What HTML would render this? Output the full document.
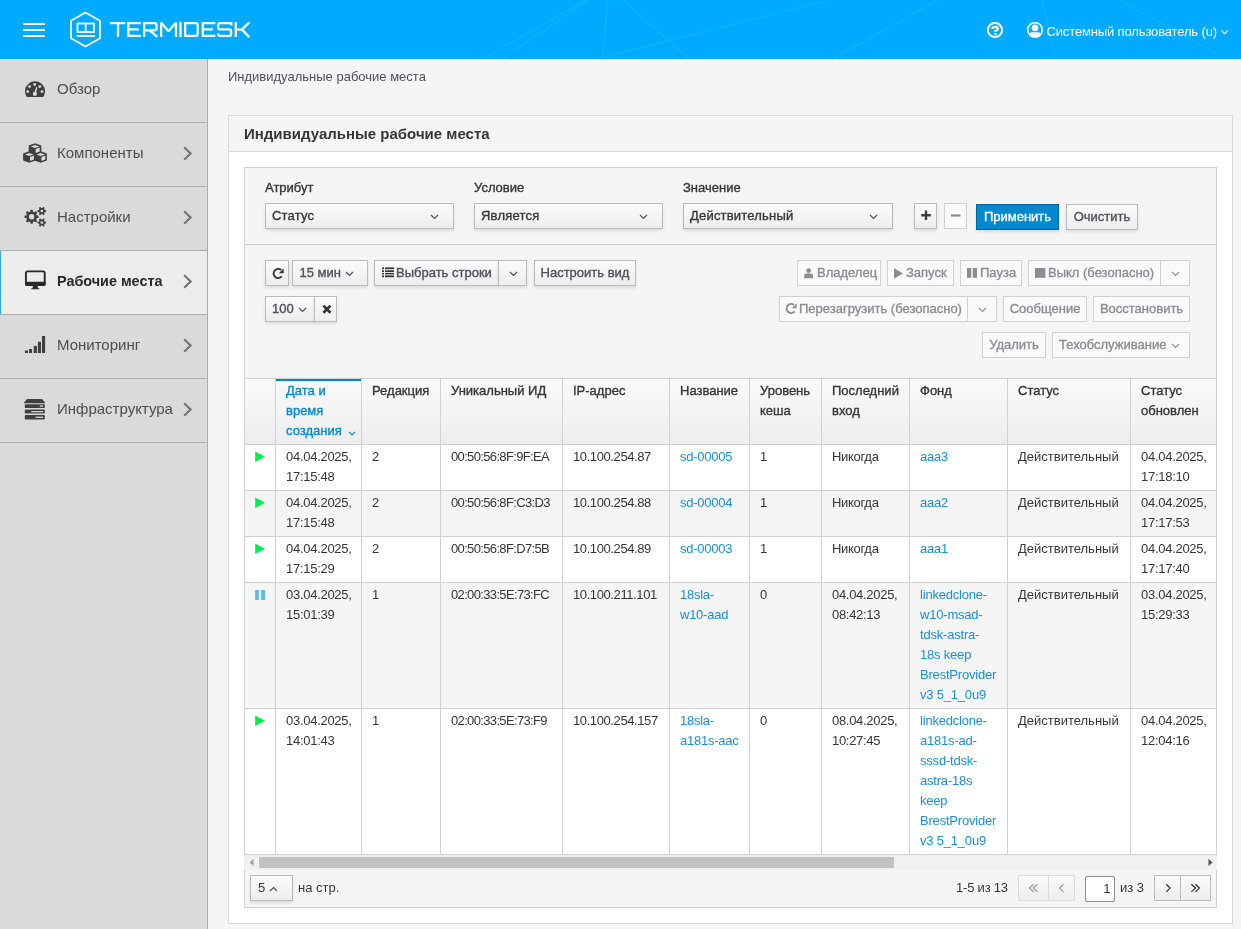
<!DOCTYPE html>
<html><head><meta charset="utf-8">
<style>
*{box-sizing:border-box}
html,body{margin:0;padding:0}
body{width:1241px;height:929px;overflow:hidden;position:relative;background:#f5f5f5;font-family:"Liberation Sans",sans-serif;font-size:13px;color:#363636}
.a{position:absolute}
.hdr{left:0;top:0;width:1241px;height:59px;background:#00aaff;overflow:hidden}
.sb{left:0;top:59px;width:208px;height:870px;background:#dadada;border-right:1px solid #ababab}
.si{position:absolute;left:0;width:207px;height:64px;border-bottom:1px solid #acacac}
.si .t{position:absolute;left:57px;top:20px;font-size:15px;line-height:20px;color:#4d4d4d;white-space:nowrap}
.si svg.ic{position:absolute}
.si svg.ch{position:absolute;left:180px;top:22px}
.sb .act{background:#ececec;border-left:1px solid #39a5dc}
.card{left:228px;top:115px;width:1005px;height:809px;background:#fff;border:1px solid #d9d9d9}
.card .ch{position:absolute;left:0;top:0;width:1003px;height:36px;background:#f5f5f5;border-bottom:1px solid #d9d9d9}
.panel{left:244px;top:167px;width:973px;height:741px;background:#f5f5f5;border:1px solid #d1d1d1}
.sel{position:absolute;height:26px;border:1px solid #bbb;background:linear-gradient(#fafafa,#ededed);box-shadow:0 2px 3px rgba(3,3,3,.1);color:#363636;line-height:24px;padding-left:6px;white-space:nowrap}
.sel svg{position:absolute;top:10px}
.btn{position:absolute;height:26px;border:1px solid #bbb;background:linear-gradient(#fafafa,#ededed);box-shadow:0 2px 3px rgba(3,3,3,.1);color:#4d5258;line-height:23px;white-space:nowrap;text-align:center}
.dis{background:#fafafa;border-color:#d1d1d1;box-shadow:none;color:#8b8d8f}
.sb2{-webkit-text-stroke:0.35px currentColor}
.prim{background:#0088ce;border-color:#00659c;color:#fff}
.th{line-height:20px;color:#363636;white-space:nowrap}
.td{line-height:20px;color:#363636;white-space:nowrap}
.pgb{border:1px solid #bbb;background:linear-gradient(#fafafa,#ededed)}
.pgb.dis{border-color:#dadada;background:linear-gradient(#fafafa,#ededed)}
.lbl{position:absolute;top:177.5px;line-height:20px;color:#363636;white-space:nowrap}
body{will-change:transform}
</style></head><body>

<!-- HEADER -->
<div class="a hdr">
  <svg class="a" style="left:0;top:0" width="1241" height="59">
    <g stroke="#12b6ff" stroke-width="1.3" opacity=".8"><line x1="481.7" y1="59" x2="586.4" y2="0"/><line x1="501.8" y1="59" x2="588.4" y2="0"/><line x1="602.5" y1="59" x2="607.8" y2="0"/><line x1="622.7" y1="0" x2="689.2" y2="59"/><line x1="596.5" y1="59" x2="830.8" y2="0"/><line x1="833" y1="59" x2="937.6" y2="0"/><line x1="1042" y1="0" x2="1056" y2="59"/><line x1="1119.5" y1="0" x2="1226" y2="59"/></g>
    <g fill="#fff">
      <rect x="23" y="23" width="22" height="2"/>
      <rect x="23" y="29" width="22" height="2"/>
      <rect x="23" y="35" width="22" height="2"/>
    </g>
    <g fill="none" stroke="#fff" stroke-width="2.3" stroke-linejoin="miter">
      <path d="M110.1,23.1H125.3M118,23.1V37.1"/>
      <path d="M140.8,23.1H128.4V35.9H140.8M128.4,29.3H138.7"/>
      <path d="M144.1,37.1V23.1H154.6Q156.6,23.1 156.6,25.1V28.3Q156.6,30.3 154.6,30.3H144.1"/><path d="M149.5,30.3L157.3,36.8" stroke-linecap="butt"/>
      <path d="M161.1,37.1V22.5L168.5,31.2L176,22.5V37.1" stroke-linejoin="bevel"/>
      <path d="M180.5,21.9V37.1"/>
      <path d="M185.2,23.1H195.6Q197.7,23.1 197.7,25.2V33.8Q197.7,35.9 195.6,35.9H185.2Z"/>
      <path d="M215.3,23.1H202.8V35.9H215.3M202.8,29.4H212.9"/>
      <path d="M231.3,25.6V23.1H220.2Q218.2,23.1 218.2,25.1V27.4Q218.2,29.4 220.2,29.4H229.1Q231.1,29.4 231.1,31.4V33.9Q231.1,35.9 229.1,35.9H220.2Q218.2,35.9 218.2,33.9V33.3"/>
      <path d="M235.8,21.9V37.1M236.5,29.6H242.5"/><path d="M249.3,22.3L242,29.6L249.3,37.1" stroke-linejoin="bevel"/>
    </g>
    <g fill="none" stroke="#fff" stroke-width="1.8">
      <polygon points="85.5,12.5 100,20.8 100,38.2 85.5,46.5 71,38.2 71,20.8" stroke-linejoin="round"/>
      <rect x="77.5" y="23.5" width="16.5" height="8.5"/>
      <line x1="85.7" y1="23.5" x2="85.7" y2="32"/>
      <line x1="76.5" y1="36" x2="95" y2="36"/>
    </g>
    <circle cx="995" cy="30" r="7.1" fill="none" stroke="#fff" stroke-width="2"/>
    <path d="M992.6,28.9Q992.6,26.9 995.2,26.9Q997.8,26.9 997.8,28.7Q997.8,29.8 996.4,30.4Q995.3,30.9 995.3,32" fill="none" stroke="#fff" stroke-width="2.4"/>
    <rect x="994.1" y="32.9" width="2.4" height="1.9" fill="#fff"/>
    <circle cx="1035" cy="30" r="7.3" fill="none" stroke="#fff" stroke-width="1.5"/>
    <clipPath id="uc"><circle cx="1035" cy="30" r="7.3"/></clipPath>
    <g fill="#fff" clip-path="url(#uc)">
      <circle cx="1035" cy="27.9" r="3.3"/>
      <path d="M1027,40Q1027,32.3 1032.5,32.3H1037.5Q1043,32.3 1043,40Z"/>
    </g>
    <path d="M1221.3,30.4L1224.6,33.6L1227.9,30.4" fill="none" stroke="#fff" stroke-width="1.2"/>
  </svg>
  <div class="a" style="left:1046.5px;top:21.5px;line-height:20px;color:#fff;white-space:nowrap;letter-spacing:-0.14px">Системный пользователь (u)</div>
</div>

<!-- SIDEBAR -->
<div class="a sb">
  <div class="si" style="top:0"><span class="t">Обзор</span>
    <svg class="ic" style="left:24px;top:22px" width="23" height="17"><path d="M2.6,15.7A10,10 0 1 1 19.4,15.7Q19,15.9 18.4,15.9H3.6Q3,15.9 2.6,15.7Z" fill="#3f3f3f"/><g fill="#dadada"><circle cx="10.7" cy="3.5" r="1.45"/><circle cx="5.6" cy="5.6" r="1.45"/><circle cx="15.8" cy="5.6" r="1.45"/><circle cx="3.7" cy="10.6" r="1.45"/><circle cx="18" cy="10.6" r="1.45"/><circle cx="10.9" cy="12.9" r="2.1"/><path d="M10.2,12.6L12.1,6.1L13.3,6.3L11.9,12.9Z"/></g></svg>
    </div>
  <div class="si" style="top:64px"><span class="t">Компоненты</span>
    <svg class="ic" style="left:23px;top:20px" width="25" height="21"><g fill="#3f3f3f">
      <path d="M12,0.3L18.3,2.6V9.3L12,11.6L5.7,9.3V2.6Z"/><path d="M6.3,8.2L12.5,10.5V17.5L6.3,19.8L0.1,17.5V10.5Z"/><path d="M17.7,8.2L23.9,10.5V17.5L17.7,19.8L11.5,17.5V10.5Z"/></g>
      <g fill="#dadada"><path d="M12,2L16.2,3.4L12,4.9L7.8,3.4Z"/><path d="M12.7,6L16.7,4.6V8.4L12.7,9.9Z"/><path d="M6.3,10L10.5,11.4L6.3,12.9L2.1,11.4Z"/><path d="M7,14L10.9,12.6V16.6L7,18Z"/><path d="M17.7,10L21.9,11.4L17.7,12.9L13.5,11.4Z"/><path d="M18.4,14L22.3,12.6V16.6L18.4,18Z"/></g></svg>
    <svg class="ch" width="14" height="18"><path d="M4.2,2.3L10.6,8.5L4.2,14.7" fill="none" stroke="#72767b" stroke-width="2.2"/></svg></div>
  <div class="si" style="top:128px"><span class="t">Настройки</span>
    <svg class="ic" style="left:24px;top:20px" width="23" height="21"><g fill="#3f3f3f"><path d="M6.39,4.54 L6.42,2.80 L8.78,2.80 L8.81,4.54 L10.47,5.22 L11.72,4.02 L13.38,5.68 L12.18,6.93 L12.86,8.59 L14.60,8.62 L14.60,10.98 L12.86,11.01 L12.18,12.67 L13.38,13.92 L11.72,15.58 L10.47,14.38 L8.81,15.06 L8.78,16.80 L6.42,16.80 L6.39,15.06 L4.73,14.38 L3.48,15.58 L1.82,13.92 L3.02,12.67 L2.34,11.01 L0.60,10.98 L0.60,8.62 L2.34,8.59 L3.02,6.93 L1.82,5.68 L3.48,4.02 L4.73,5.22Z"/><path d="M18.48,0.98 L19.10,-0.20 L20.79,0.77 L20.08,1.90 L20.76,3.08 L22.09,3.03 L22.09,4.97 L20.76,4.92 L20.08,6.10 L20.79,7.23 L19.10,8.20 L18.48,7.02 L17.12,7.02 L16.50,8.20 L14.81,7.23 L15.52,6.10 L14.84,4.92 L13.51,4.97 L13.51,3.03 L14.84,3.08 L15.52,1.90 L14.81,0.77 L16.50,-0.20 L17.12,0.98Z"/><path d="M18.48,12.58 L19.10,11.40 L20.79,12.37 L20.08,13.50 L20.76,14.68 L22.09,14.63 L22.09,16.57 L20.76,16.52 L20.08,17.70 L20.79,18.83 L19.10,19.80 L18.48,18.62 L17.12,18.62 L16.50,19.80 L14.81,18.83 L15.52,17.70 L14.84,16.52 L13.51,16.57 L13.51,14.63 L14.84,14.68 L15.52,13.50 L14.81,12.37 L16.50,11.40 L17.12,12.58Z"/></g><g fill="#dadada"><circle cx="7.6" cy="9.8" r="2.7"/><circle cx="17.8" cy="4" r="1.35"/><circle cx="17.8" cy="15.6" r="1.35"/></g></svg>
    <svg class="ch" width="14" height="18"><path d="M4.2,2.3L10.6,8.5L4.2,14.7" fill="none" stroke="#72767b" stroke-width="2.2"/></svg></div>
  <div class="si act" style="top:192px"><span class="t" style="left:56px;font-weight:bold;color:#292929;font-size:14.4px">Рабочие места</span>
    <svg class="ic" style="left:22.5px;top:19.3px" width="23" height="20"><rect x="1.9" y="1.4" width="18.8" height="13.6" rx="1.6" fill="none" stroke="#292929" stroke-width="1.9"/><rect x="1" y="11.8" width="20.6" height="4" rx="1" fill="#292929"/><path d="M9,15.4H13.6L14,18.2H15.3V19.2H7.3V18.2H8.6Z" fill="#292929"/></svg>
    <svg class="ch" style="left:179px" width="14" height="18"><path d="M4.2,2.3L10.6,8.5L4.2,14.7" fill="none" stroke="#72767b" stroke-width="2.2"/></svg></div>
  <div class="si" style="top:256px"><span class="t">Мониторинг</span>
    <svg class="ic" style="left:24px;top:21px" width="22" height="19"><g fill="#3f3f3f"><rect x="0.9" y="14.5" width="3.1" height="2.5"/><rect x="5" y="13" width="3.1" height="4"/><rect x="9.8" y="9.9" width="3.1" height="7.1"/><rect x="13.9" y="5.8" width="3.1" height="11.2"/><rect x="18" y="0" width="3.1" height="17"/></g></svg>
    <svg class="ch" width="14" height="18"><path d="M4.2,2.3L10.6,8.5L4.2,14.7" fill="none" stroke="#72767b" stroke-width="2.2"/></svg></div>
  <div class="si" style="top:320px"><span class="t">Инфраструктура</span>
    <svg class="ic" style="left:24px;top:20px" width="22" height="22"><g fill="#3f3f3f"><path d="M3,0H18L21,3.6V4.2H0V3.6Z"/><rect x="0.8" y="5.2" width="20" height="3.8" rx="0.8"/><rect x="0.8" y="10.6" width="20" height="4" rx="0.8"/><rect x="0.8" y="16" width="20" height="4.5" rx="0.8"/></g>
      <g fill="#cfcfcf"><rect x="15.8" y="6.4" width="3.2" height="1.4"/><rect x="7.2" y="12" width="11.8" height="1.3"/><rect x="11.6" y="17.6" width="7.4" height="1.4"/></g></svg>
    <svg class="ch" width="14" height="18"><path d="M4.2,2.3L10.6,8.5L4.2,14.7" fill="none" stroke="#72767b" stroke-width="2.2"/></svg></div>
</div>

<!-- BREADCRUMB -->
<div class="a" style="left:228px;top:67px;line-height:20px;color:#4d5258;white-space:nowrap">Индивидуальные рабочие места</div>

<!-- CARD -->
<div class="a card">
  <div class="ch"><div class="a" style="left:15px;top:8px;font-size:15px;font-weight:bold;line-height:20px;color:#363636;white-space:nowrap">Индивидуальные рабочие места</div></div>
</div>

<div class="a panel"></div>
<!-- PANEL START -->
<div class="lbl sb2" style="left:265px">Атрибут</div>
<div class="lbl sb2" style="left:474px">Условие</div>
<div class="lbl sb2" style="left:683px">Значение</div>
<div class="sel" style="left:265px;top:203px;width:189px"><span class="sb2" style="letter-spacing:0.2px">Статус</span><svg width="9" height="6" style="position:absolute;left:164px;top:10px"><path d="M1,1L4.5,4.5L8,1" fill="none" stroke="#4d5258" stroke-width="1.2"/></svg></div>
<div class="sel" style="left:474px;top:203px;width:189px"><span class="sb2" style="letter-spacing:0.2px">Является</span><svg width="9" height="6" style="position:absolute;left:164px;top:10px"><path d="M1,1L4.5,4.5L8,1" fill="none" stroke="#4d5258" stroke-width="1.2"/></svg></div>
<div class="sel" style="left:683px;top:203px;width:210px"><span class="sb2" style="letter-spacing:0.2px">Действительный</span><svg width="9" height="6" style="position:absolute;left:185px;top:10px"><path d="M1,1L4.5,4.5L8,1" fill="none" stroke="#4d5258" stroke-width="1.2"/></svg></div>
<div class="btn " style="left:914px;top:203px;width:23px;height:26px;"><svg width="23" height="24" style="position:absolute;left:0;top:0"><path d="M11,6.4V16.1M6.2,11.2H15.8" stroke="#3a3d40" stroke-width="2.4" fill="none"/></svg></div>
<div class="btn dis" style="left:944px;top:203px;width:23px;height:26px;"><svg width="23" height="24" style="position:absolute;left:0;top:0"><path d="M6,11.5H15.5" stroke="#8b8d8f" stroke-width="2.2" fill="none"/></svg></div>
<div class="btn prim sb2" style="left:976px;top:204px;width:83px;height:26px;">Применить</div>
<div class="btn sb2" style="left:1066px;top:204px;width:72px;height:26px;">Очистить</div>
<div class="a" style="left:245px;top:244px;width:971px;height:1px;background:#d1d1d1"></div>
<div class="btn " style="left:265px;top:260px;width:24px;height:26px;"><svg width="24" height="24" style="position:absolute;left:0;top:0"><path d="M15.09,9.05A4.5,4.5 0 1 0 15.65,15.39" fill="none" stroke="#363636" stroke-width="2"/><path d="M17.6,7.4V12.2H12.8Z" fill="#363636"/></svg></div>
<div class="btn " style="left:292px;top:260px;width:76px;height:26px;"><span class="sb2" style="position:absolute;left:6.5px">15 мин</span><svg width="9" height="6" style="position:absolute;left:52px;top:10px"><path d="M1,1L4.5,4.5L8,1" fill="none" stroke="#4d5258" stroke-width="1.2"/></svg></div>
<div class="btn " style="left:374px;top:260px;width:125px;height:26px;"><svg width="13" height="11" style="position:absolute;left:6px;top:6px"><g fill="#363636"><rect x="1" y="0.4" width="2" height="1.8"/><rect x="4" y="0.4" width="9" height="1.8"/><rect x="1" y="3.3" width="2" height="1.8"/><rect x="4" y="3.3" width="9" height="1.8"/><rect x="1" y="6" width="2" height="1.4"/><rect x="4" y="6" width="9" height="1.4"/><rect x="1" y="8.4" width="2" height="1.8"/><rect x="4" y="8.4" width="9" height="1.8"/></g></svg><span class="sb2" style="position:absolute;left:21px">Выбрать строки</span></div>
<div class="btn " style="left:498px;top:260px;width:29px;height:26px;"><svg width="9" height="6" style="position:absolute;left:10px;top:10px"><path d="M1,1L4.5,4.5L8,1" fill="none" stroke="#4d5258" stroke-width="1.2"/></svg></div>
<div class="btn " style="left:534px;top:260px;width:102px;height:26px;"><span class="sb2">Настроить вид</span></div>
<div class="btn " style="left:265px;top:296px;width:50px;height:26px;"><span class="sb2" style="position:absolute;left:6px">100</span><svg width="9" height="6" style="position:absolute;left:32px;top:10px"><path d="M1,1L4.5,4.5L8,1" fill="none" stroke="#4d5258" stroke-width="1.2"/></svg></div>
<div class="btn " style="left:314px;top:296px;width:23px;height:26px;"><svg width="22" height="24" style="position:absolute;left:0;top:0"><path d="M8.4,8.6L15.5,15.7M15.5,8.6L8.4,15.7" stroke="#363636" stroke-width="2.7" fill="none"/></svg></div>
<div class="btn dis" style="left:797px;top:260px;width:84px;height:26px;"><svg width="10" height="11" style="position:absolute;left:6px;top:7px"><circle cx="4.6" cy="2.6" r="2.4" fill="#8b8d8f"/><path d="M0.2,10.2V7.8Q0.2,5.6 2.4,5.6H6.8Q9,5.6 9,7.8V10.2Z" fill="#8b8d8f"/></svg><span class="sb2" style="position:absolute;left:19px">Владелец</span></div>
<div class="btn dis" style="left:887px;top:260px;width:67px;height:26px;"><svg width="10" height="12" style="position:absolute;left:6px;top:6px"><path d="M0,1.2L9,6.45L0,11.7Z" fill="#8b8d8f"/></svg><span class="sb2" style="position:absolute;left:18px">Запуск</span></div>
<div class="btn dis" style="left:960px;top:260px;width:62px;height:26px;"><svg width="11" height="11" style="position:absolute;left:6px;top:7px"><rect x="0" y="0" width="4.2" height="9.8" fill="#8b8d8f"/><rect x="5.7" y="0" width="4.3" height="9.8" fill="#8b8d8f"/></svg><span class="sb2" style="position:absolute;left:19px">Пауза</span></div>
<div class="btn dis" style="left:1028px;top:260px;width:133px;height:26px;"><svg width="11" height="11" style="position:absolute;left:6px;top:7px"><rect x="0" y="0" width="10.4" height="9.8" fill="#8b8d8f"/></svg><span class="sb2" style="position:absolute;left:19px">Выкл (безопасно)</span></div>
<div class="btn dis" style="left:1160px;top:260px;width:30px;height:26px;"><svg width="9" height="6" style="position:absolute;left:9.5px;top:10px"><path d="M1,1L4.5,4.5L8,1" fill="none" stroke="#8b8d8f" stroke-width="1.2"/></svg></div>
<div class="btn dis" style="left:779px;top:296px;width:189px;height:26px;"><svg width="24" height="24" style="position:absolute;left:-0.7px;top:-1.3px"><path d="M15.09,9.05A4.5,4.5 0 1 0 15.65,15.39" fill="none" stroke="#8b8d8f" stroke-width="2"/><path d="M17.6,7.4V12.2H12.8Z" fill="#8b8d8f"/></svg><span class="sb2" style="position:absolute;left:19px">Перезагрузить (безопасно)</span></div>
<div class="btn dis" style="left:967px;top:296px;width:30px;height:26px;"><svg width="9" height="6" style="position:absolute;left:9.5px;top:10px"><path d="M1,1L4.5,4.5L8,1" fill="none" stroke="#8b8d8f" stroke-width="1.2"/></svg></div>
<div class="btn dis" style="left:1003px;top:296px;width:84px;height:26px;"><span class="sb2">Сообщение</span></div>
<div class="btn dis" style="left:1093px;top:296px;width:97px;height:26px;"><span class="sb2">Восстановить</span></div>
<div class="btn dis" style="left:982px;top:332px;width:64px;height:26px;"><span class="sb2">Удалить</span></div>
<div class="btn dis" style="left:1052px;top:332px;width:138px;height:26px;"><span class="sb2" style="position:absolute;left:6px">Техобслуживание</span><svg width="9" height="6" style="position:absolute;left:118px;top:10px"><path d="M1,1L4.5,4.5L8,1" fill="none" stroke="#8b8d8f" stroke-width="1.2"/></svg></div>
<!-- PANEL END -->
<!-- TABLE START -->
<div class="a" style="left:245px;top:378px;width:971px;height:477px;overflow:hidden">
<div class="a" style="left:0px;top:1px;width:971px;height:65px;background:linear-gradient(#fafafa,#ededed)"></div>
<div class="a" style="left:0px;top:67px;width:971px;height:45px;background:#fff"></div>
<div class="a" style="left:0px;top:113px;width:971px;height:45px;background:#f5f5f5"></div>
<div class="a" style="left:0px;top:159px;width:971px;height:45px;background:#fff"></div>
<div class="a" style="left:0px;top:205px;width:971px;height:125px;background:#f5f5f5"></div>
<div class="a" style="left:0px;top:331px;width:971px;height:145px;background:#fff"></div>
<div class="a" style="left:0px;top:0px;width:971px;height:1px;background:#d1d1d1"></div>
<div class="a" style="left:0px;top:66px;width:971px;height:1px;background:#d1d1d1"></div>
<div class="a" style="left:0px;top:112px;width:971px;height:1px;background:#d1d1d1"></div>
<div class="a" style="left:0px;top:158px;width:971px;height:1px;background:#d1d1d1"></div>
<div class="a" style="left:0px;top:204px;width:971px;height:1px;background:#d1d1d1"></div>
<div class="a" style="left:0px;top:330px;width:971px;height:1px;background:#d1d1d1"></div>
<div class="a" style="left:0px;top:476px;width:971px;height:1px;background:#d1d1d1"></div>
<div class="a" style="left:30px;top:1px;width:1px;height:475px;background:#d1d1d1"></div>
<div class="a" style="left:116px;top:1px;width:1px;height:475px;background:#d1d1d1"></div>
<div class="a" style="left:195px;top:1px;width:1px;height:475px;background:#d1d1d1"></div>
<div class="a" style="left:317px;top:1px;width:1px;height:475px;background:#d1d1d1"></div>
<div class="a" style="left:424px;top:1px;width:1px;height:475px;background:#d1d1d1"></div>
<div class="a" style="left:504px;top:1px;width:1px;height:475px;background:#d1d1d1"></div>
<div class="a" style="left:576px;top:1px;width:1px;height:475px;background:#d1d1d1"></div>
<div class="a" style="left:664px;top:1px;width:1px;height:475px;background:#d1d1d1"></div>
<div class="a" style="left:762px;top:1px;width:1px;height:475px;background:#d1d1d1"></div>
<div class="a" style="left:885px;top:1px;width:1px;height:475px;background:#d1d1d1"></div>
<div class="a" style="left:31px;top:1px;width:85px;height:2px;background:#0088ce"></div>
<div class="a th sb2" style="left:41px;top:3px;color:#0088ce">Дата и<br>время<br>создания</div>
<div class="a th sb2" style="left:127px;top:3px;">Редакция</div>
<div class="a th sb2" style="left:206px;top:3px;">Уникальный ИД</div>
<div class="a th sb2" style="left:328px;top:3px;">IP-адрес</div>
<div class="a th sb2" style="left:435px;top:3px;">Название</div>
<div class="a th sb2" style="left:515px;top:3px;">Уровень<br>кеша</div>
<div class="a th sb2" style="left:587px;top:3px;">Последний<br>вход</div>
<div class="a th sb2" style="left:675px;top:3px;">Фонд</div>
<div class="a th sb2" style="left:773px;top:3px;">Статус</div>
<div class="a th sb2" style="left:896px;top:3px;">Статус<br>обновлен</div>
<svg class="a" style="left:103px;top:53px" width="9" height="6"><path d="M1.2,0.9L4.1,3.9L7,0.9" fill="none" stroke="#0088ce" stroke-width="1.3"/></svg>
<svg class="a" style="left:10px;top:73px;top:73px" width="11" height="12"><path d="M0.2,0.4L10.1,5.7L0.2,11Z" fill="#03ef50"/></svg>
<div class="a td" style="left:41px;top:69px;letter-spacing:-0.28px;">04.04.2025,<br>17:15:48</div>
<div class="a td" style="left:127px;top:69px;letter-spacing:0;">2</div>
<div class="a td" style="left:206px;top:69px;letter-spacing:-0.65px;">00:50:56:8F:9F:EA</div>
<div class="a td" style="left:328px;top:69px;letter-spacing:-0.4px;">10.100.254.87</div>
<div class="a td" style="left:435px;top:69px;letter-spacing:-0.25px;color:#1a8fd2;">sd-00005</div>
<div class="a td" style="left:515px;top:69px;letter-spacing:0;">1</div>
<div class="a td" style="left:587px;top:69px;letter-spacing:-0.3px;">Никогда</div>
<div class="a td" style="left:675px;top:69px;letter-spacing:-0.2px;color:#1a8fd2;">aaa3</div>
<div class="a td" style="left:773px;top:69px;letter-spacing:0;">Действительный</div>
<div class="a td" style="left:896px;top:69px;letter-spacing:-0.28px;">04.04.2025,<br>17:18:10</div>
<svg class="a" style="left:10px;top:73px;top:119px" width="11" height="12"><path d="M0.2,0.4L10.1,5.7L0.2,11Z" fill="#03ef50"/></svg>
<div class="a td" style="left:41px;top:115px;letter-spacing:-0.28px;">04.04.2025,<br>17:15:48</div>
<div class="a td" style="left:127px;top:115px;letter-spacing:0;">2</div>
<div class="a td" style="left:206px;top:115px;letter-spacing:-0.65px;">00:50:56:8F:C3:D3</div>
<div class="a td" style="left:328px;top:115px;letter-spacing:-0.4px;">10.100.254.88</div>
<div class="a td" style="left:435px;top:115px;letter-spacing:-0.25px;color:#1a8fd2;">sd-00004</div>
<div class="a td" style="left:515px;top:115px;letter-spacing:0;">1</div>
<div class="a td" style="left:587px;top:115px;letter-spacing:-0.3px;">Никогда</div>
<div class="a td" style="left:675px;top:115px;letter-spacing:-0.2px;color:#1a8fd2;">aaa2</div>
<div class="a td" style="left:773px;top:115px;letter-spacing:0;">Действительный</div>
<div class="a td" style="left:896px;top:115px;letter-spacing:-0.28px;">04.04.2025,<br>17:17:53</div>
<svg class="a" style="left:10px;top:73px;top:165px" width="11" height="12"><path d="M0.2,0.4L10.1,5.7L0.2,11Z" fill="#03ef50"/></svg>
<div class="a td" style="left:41px;top:161px;letter-spacing:-0.28px;">04.04.2025,<br>17:15:29</div>
<div class="a td" style="left:127px;top:161px;letter-spacing:0;">2</div>
<div class="a td" style="left:206px;top:161px;letter-spacing:-0.65px;">00:50:56:8F:D7:5B</div>
<div class="a td" style="left:328px;top:161px;letter-spacing:-0.4px;">10.100.254.89</div>
<div class="a td" style="left:435px;top:161px;letter-spacing:-0.25px;color:#1a8fd2;">sd-00003</div>
<div class="a td" style="left:515px;top:161px;letter-spacing:0;">1</div>
<div class="a td" style="left:587px;top:161px;letter-spacing:-0.3px;">Никогда</div>
<div class="a td" style="left:675px;top:161px;letter-spacing:-0.2px;color:#1a8fd2;">aaa1</div>
<div class="a td" style="left:773px;top:161px;letter-spacing:0;">Действительный</div>
<div class="a td" style="left:896px;top:161px;letter-spacing:-0.28px;">04.04.2025,<br>17:17:40</div>
<svg class="a" style="left:10px;top:211px" width="11" height="12"><rect x="0.1" y="1" width="3.8" height="10" fill="#5abcec"/><rect x="6.1" y="1" width="4" height="10" fill="#5abcec"/></svg>
<div class="a td" style="left:41px;top:207px;letter-spacing:-0.28px;">03.04.2025,<br>15:01:39</div>
<div class="a td" style="left:127px;top:207px;letter-spacing:0;">1</div>
<div class="a td" style="left:206px;top:207px;letter-spacing:-0.65px;">02:00:33:5E:73:FC</div>
<div class="a td" style="left:328px;top:207px;letter-spacing:-0.4px;">10.100.211.101</div>
<div class="a td" style="left:435px;top:207px;letter-spacing:-0.25px;color:#1a8fd2;">18sla-<br>w10-aad</div>
<div class="a td" style="left:515px;top:207px;letter-spacing:0;">0</div>
<div class="a td" style="left:587px;top:207px;letter-spacing:-0.3px;">04.04.2025,<br>08:42:13</div>
<div class="a td" style="left:675px;top:207px;letter-spacing:-0.2px;color:#1a8fd2;">linkedclone-<br>w10-msad-<br>tdsk-astra-<br>18s keep<br>BrestProvider<br>v3 5_1_0u9</div>
<div class="a td" style="left:773px;top:207px;letter-spacing:0;">Действительный</div>
<div class="a td" style="left:896px;top:207px;letter-spacing:-0.28px;">03.04.2025,<br>15:29:33</div>
<svg class="a" style="left:10px;top:73px;top:337px" width="11" height="12"><path d="M0.2,0.4L10.1,5.7L0.2,11Z" fill="#03ef50"/></svg>
<div class="a td" style="left:41px;top:333px;letter-spacing:-0.28px;">03.04.2025,<br>14:01:43</div>
<div class="a td" style="left:127px;top:333px;letter-spacing:0;">1</div>
<div class="a td" style="left:206px;top:333px;letter-spacing:-0.65px;">02:00:33:5E:73:F9</div>
<div class="a td" style="left:328px;top:333px;letter-spacing:-0.4px;">10.100.254.157</div>
<div class="a td" style="left:435px;top:333px;letter-spacing:-0.25px;color:#1a8fd2;">18sla-<br>a181s-aac</div>
<div class="a td" style="left:515px;top:333px;letter-spacing:0;">0</div>
<div class="a td" style="left:587px;top:333px;letter-spacing:-0.3px;">08.04.2025,<br>10:27:45</div>
<div class="a td" style="left:675px;top:333px;letter-spacing:-0.2px;color:#1a8fd2;">linkedclone-<br>a181s-ad-<br>sssd-tdsk-<br>astra-18s<br>keep<br>BrestProvider<br>v3 5_1_0u9</div>
<div class="a td" style="left:773px;top:333px;letter-spacing:0;">Действительный</div>
<div class="a td" style="left:896px;top:333px;letter-spacing:-0.28px;">04.04.2025,<br>12:04:16</div>
<div class="a" style="left:0px;top:477px;width:971px;height:14px;background:#f1f1f1"></div>
</div>
<div class="a" style="left:244px;top:855px;width:973px;height:15px;background:#f1f1f1"></div>
<div class="a" style="left:259px;top:857px;width:635px;height:11px;background:#c1c1c1"></div>
<svg class="a" style="left:246.5px;top:857px" width="10" height="11"><path d="M6.5,1.8V9L2.5,5.4Z" fill="#a3a3a3"/></svg>
<svg class="a" style="left:1205px;top:857px" width="10" height="11"><path d="M3.5,1.8V9L7.5,5.4Z" fill="#505050"/></svg>
<div class="a" style="left:244px;top:870px;width:973px;height:38px;border:1px solid #d1d1d1;border-top:none;background:#f5f5f5"></div>
<div class="sel" style="left:250px;top:875px;width:43px;padding-left:7px">5<svg width="9" height="6" style="position:absolute;left:18px;top:10px"><path d="M1,5L4.5,1.5L8,5" fill="none" stroke="#4d5258" stroke-width="1.2"/></svg></div>
<div class="a" style="left:298px;top:878px;line-height:20px;color:#363636">на стр.</div>
<div class="a" style="left:956px;top:878px;line-height:20px;color:#363636;letter-spacing:-0.2px">1-5 из 13</div>
<div class="a pgb dis" style="left:1018px;top:875px;width:31px;height:26px"><svg width="30" height="24" style="position:absolute;left:0;top:0"><path d="M14.6,8.2L10.6,12.1L14.6,16M18.4,8.2L14.4,12.1L18.4,16" fill="none" stroke="#a0a0a0" stroke-width="1.3"/></svg></div>
<div class="a pgb dis" style="left:1048px;top:875px;width:27px;height:26px"><svg width="26" height="24" style="position:absolute;left:0;top:0"><path d="M14.5,8.3L10.7,12.1L14.5,15.9" fill="none" stroke="#a0a0a0" stroke-width="1.3"/></svg></div>
<div class="a" style="left:1085px;top:876px;width:30px;height:26px;border:1px solid #8b8d8f;border-radius:2px;background:#fff;text-align:right;padding-right:3.5px;line-height:23px;color:#363636">1</div>
<div class="a" style="left:1120px;top:878px;line-height:20px;color:#363636">из 3</div>
<div class="a pgb" style="left:1154px;top:875px;width:27px;height:26px"><svg width="26" height="24" style="position:absolute;left:0;top:0"><path d="M11.3,8.3L15,12.1L11.3,15.9" fill="none" stroke="#363636" stroke-width="1.3"/></svg></div>
<div class="a pgb" style="left:1180px;top:875px;width:31px;height:26px"><svg width="30" height="24" style="position:absolute;left:0;top:0"><path d="M10.4,8.3L14.4,12.1L10.4,15.9M14.4,8.3L18.4,12.1L14.4,15.9" fill="none" stroke="#363636" stroke-width="1.3"/></svg></div>
<!-- TABLE END -->

</body></html>
